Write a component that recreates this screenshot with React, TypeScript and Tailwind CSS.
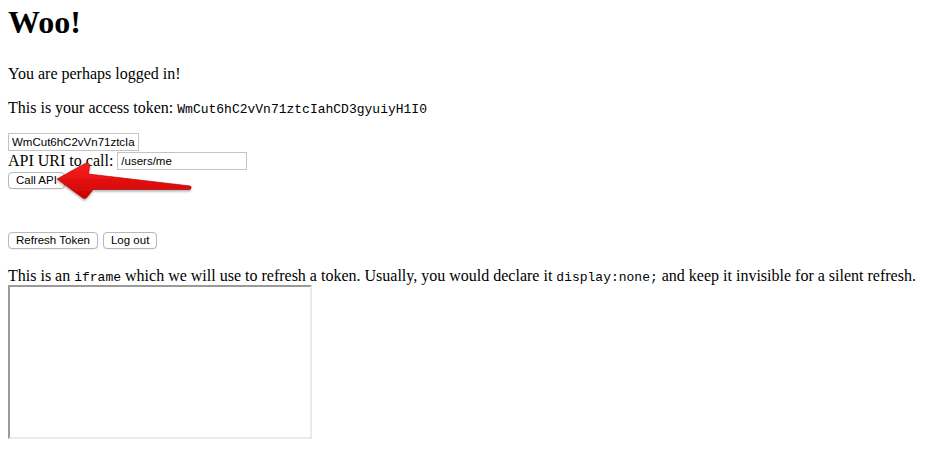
import React from "react";

const serif = { fontFamily: '"Liberation Serif", "Times New Roman", serif' };

function Arrow() {
  return (
    <svg
      className="absolute left-0 top-0 pointer-events-none"
      width="210"
      height="210"
      viewBox="0 0 210 210"
    >
      <defs>
        <linearGradient id="ag" x1="0" y1="0" x2="0" y2="1">
          <stop offset="0" stopColor="#ff2020" />
          <stop offset="1" stopColor="#c80000" />
        </linearGradient>
        <filter id="sh" x="-20%" y="-20%" width="140%" height="160%">
          <feDropShadow dx="0" dy="1.5" stdDeviation="1.2" floodColor="#000" floodOpacity="0.35" />
        </filter>
      </defs>
      <path
        d="M57 179 L85 163.5 Q90 161.5 89.5 166.5 L88.5 174 L190.5 186 Q192 188 190 189.5 L93 189.5 L88 196 Q85 200.5 81.5 197 Z"
        fill="url(#ag)"
        stroke="#b00000"
        strokeWidth="0.6"
        strokeLinejoin="round"
        filter="url(#sh)"
      />
    </svg>
  );
}

export default function App() {
  const btn =
    "h-[17px] rounded-[4px] border border-[#b8b8b8] bg-white px-[7px] text-[11.5px] leading-[15px] text-black shadow-[0_0.5px_0.5px_rgba(0,0,0,0.1)]";
  const sans = { fontFamily: '"Liberation Sans", Arial, sans-serif' };
  const mono = { fontFamily: '"Liberation Mono", "Courier New", monospace' };
  const input =
    "h-[18px] border border-[#c4c4c4] bg-white px-[3px] text-[11.5px] leading-[16px] text-black outline-none";
  return (
    <div className="relative min-h-[458px] w-[936px] bg-white px-2 pt-[4px] text-[16px] text-black" style={serif}>
      <h1 className="m-0 text-[32px] font-bold leading-[37px]">Woo!</h1>
      <p className="mt-[24px] leading-[18px]">You are perhaps logged in!</p>
      <p className="mt-4 leading-[18px]">
        This is your access token:{" "}
        <code className="text-[13px]" style={mono}>
          WmCut6hC2vVn71ztcIahCD3gyuiyH1I0
        </code>
      </p>
      <div className="mt-[13px] leading-[18px]">
        <input readOnly value="WmCut6hC2vVn71ztcIahCD3gyuiyH1I0" className={`${input} w-[131px]`} style={sans} />
      </div>
      <div className="flex h-[19px] items-center leading-[18px]">
        <span>API URI to call:</span>
        <input readOnly value="/users/me" className={`${input} ml-[4px] w-[130px]`} style={sans} />
      </div>
      <div className="mt-[2px] flex">
        <button className={btn} style={sans}>
          Call API
        </button>
      </div>
      <div className="mt-[43px] flex gap-[5px]">
        <button className={btn} style={sans}>
          Refresh Token
        </button>
        <button className={btn} style={sans}>
          Log out
        </button>
      </div>
      <p className="mt-[18px] leading-[18px]">
        This is an{" "}
        <code className="text-[13px]" style={mono}>
          iframe
        </code>{" "}
        which we will use to refresh a token. Usually, you would declare it{" "}
        <code className="text-[13px]" style={mono}>
          display:none;
        </code>{" "}
        and keep it invisible for a silent refresh.
      </p>
      <div className="-mt-[2px] h-[154px] w-[304px] border-2 border-t-[#9a9a9a] border-l-[#9a9a9a] border-b-[#ebebeb] border-r-[#ebebeb] bg-white" />
      <Arrow />
    </div>
  );
}
